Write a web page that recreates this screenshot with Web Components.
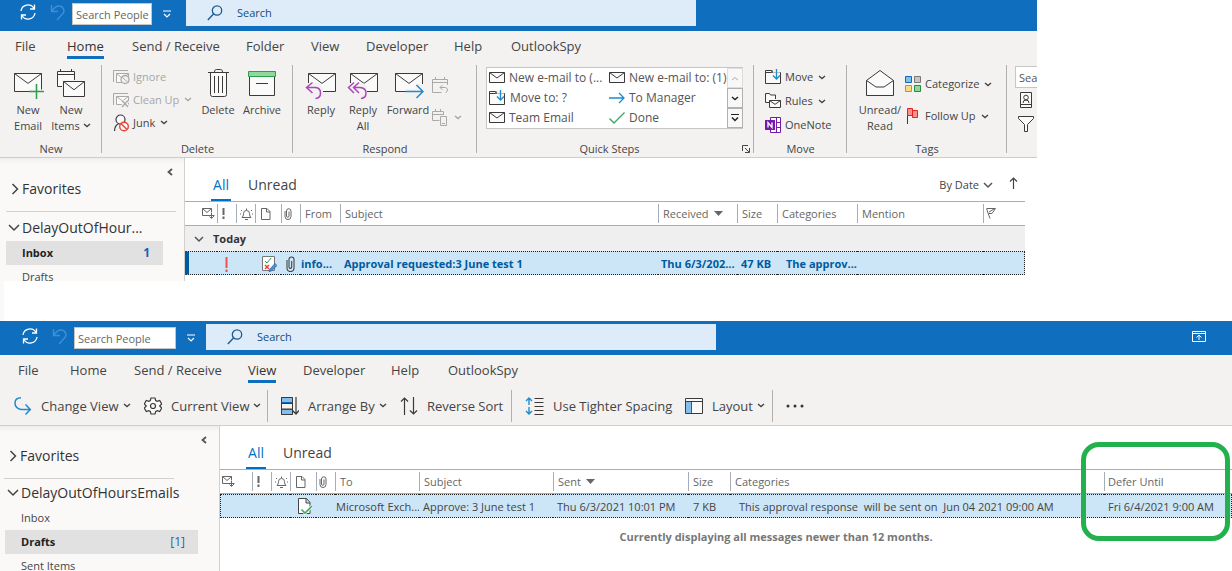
<!DOCTYPE html>
<html lang="en">
<head>
<meta charset="utf-8">
<title>Outlook - delayed emails</title>
<style>
  body { margin: 0; background: #fff; color: #444; font: 12px/16px "Open Sans", "Noto Sans", sans-serif; overflow-x: hidden; }
  .first { margin-right: 195px; }
  .spacer { height: 40px; border-left: 4px solid #faf9f8; }
</style>
</head>
<body>
<ol-window class="first">
  <ol-titlebar slot="title" style="--pad:20px;--top:0px;--people:80px;--gap:15px"></ol-titlebar>
  <ol-tabs slot="tabs" active="Home" items="File,Home,Send / Receive,Folder,View,Developer,Help,OutlookSpy" style="--pad:15px;--cols:52px 65px 114px 65px 55px 88px 57px auto;--below:3px"></ol-tabs>
  <ol-ribbon slot="ribbon">
    <ol-group label="New" style="--w:101px;--pad:7px">
      <ol-big icon="mailplus" label="New|Email" style="--w:42px"></ol-big>
      <ol-big icon="newitems" label="New|Items" menu style="--w:44px"></ol-big>
    </ol-group>
    <ol-group label="Delete" style="--w:190px;--pad:11px">
      <ol-stack style="--w:85px;--row:23px">
        <ol-small icon="ignore" label="Ignore" off></ol-small>
        <ol-small icon="cleanup" label="Clean Up" menu off></ol-small>
        <ol-small icon="junk" label="Junk" menu></ol-small>
      </ol-stack>
      <ol-big icon="trash" label="Delete" style="--w:40px"></ol-big>
      <ol-big icon="archive" label="Archive" style="--w:48px"></ol-big>
    </ol-group>
    <ol-group label="Respond" style="--w:183px;--pad:7px">
      <ol-big icon="reply" label="Reply" style="--w:42px"></ol-big>
      <ol-big icon="replyall" label="Reply|All" style="--w:42px"></ol-big>
      <ol-big icon="forward" label="Forward" style="--w:48px"></ol-big>
      <ol-stack style="--w:36px;--row:32px;--lead:4px">
        <ol-small icon="meeting" label="" off></ol-small>
        <ol-small icon="moreresp" label="" menu off></ol-small>
      </ol-stack>
    </ol-group>
    <ol-group label="Quick Steps" launcher style="--w:276px;--pad:9px">
      <ol-quicksteps></ol-quicksteps>
    </ol-group>
    <ol-group label="Move" style="--w:92px;--pad:11px">
      <ol-stack style="--w:80px;--row:24px">
        <ol-small icon="move" label="Move" menu></ol-small>
        <ol-small icon="rules" label="Rules" menu></ol-small>
        <ol-small icon="onenote" label="OneNote"></ol-small>
      </ol-stack>
    </ol-group>
    <ol-group label="Tags" style="--w:159px;--pad:8px">
      <ol-big icon="unread" label="Unread/|Read" style="--w:50px"></ol-big>
      <ol-stack style="--w:100px;--row:32px;--lead:3px">
        <ol-small icon="categorize" label="Categorize" menu></ol-small>
        <ol-small icon="flag" label="Follow Up" menu></ol-small>
      </ol-stack>
    </ol-group>
    <ol-find></ol-find>
  </ol-ribbon>
  <ol-folders slot="folders" kind="inbox"></ol-folders>
  <ol-inbox slot="list"></ol-inbox>
</ol-window>
<div class="spacer"></div>
<ol-window>
  <ol-titlebar slot="title" display style="--pad:22px;--top:3px;--people:102px;--gap:11px"></ol-titlebar>
  <ol-tabs slot="tabs" active="View" items="File,Home,Send / Receive,View,Developer,Help,OutlookSpy" style="--pad:18px;--cols:52px 64px 114px 55px 88px 57px auto;--below:3px"></ol-tabs>
  <ol-toolbar slot="ribbon"></ol-toolbar>
  <ol-folders slot="folders" kind="drafts"></ol-folders>
  <ol-drafts slot="list"></ol-drafts>
</ol-window>

<script>
const G = '#3b3a39', B = '#1e8bcd', P = '#ac47b8', R = '#e8443a', N = '#2f9e4a', L = '#a9a9a9';
const env = (x, y, w, h, c = G, f = '#fafafa') =>
  `<path d="M${x} ${y}h${w}v${h}h-${w}z" fill="${f}" stroke="${c}"/><path d="M${x} ${y}l${w / 2} ${h * 0.55}l${w / 2} -${h * 0.55}" stroke="${c}"/>`;
/* name: [width, height, drawing] */
const ICONS = {
  mailplus: [32, 32, env(2.5, 5.5, 27, 18) + `<path d="M17 23.500h15M24.500 16v15" stroke="#f3f2f1" stroke-width="4"/><path d="M17 23.500h15M24.500 16v15" stroke="${N}" stroke-width="1.500"/>`],
  newitems: [32, 32, `<path d="M2.500 3.500h17v15h-17zM2.500 6.500h17M5.500 1v3M16.500 1v3" fill="#fafafa" stroke="${G}"/><path d="M7 12h25v18H7z" fill="#f3f2f1" />` + env(8.5, 13.5, 21, 15)],
  trash: [32, 32, `<path d="M6 4.500h21M12.500 4c0-2 1-2.500 2-2.500h4c1 0 2 .5 2 2.500" stroke="${G}"/><path d="M8.500 5v21.500q0 2 2 2h12q2 0 2-2V5" fill="#fafafa" stroke="${G}"/><path d="M12.500 8v17M16.500 8v17M20.500 8v17" stroke="${G}"/>`],
  archive: [32, 32, `<path d="M3.500 9v18.500h25V9" fill="#fafafa" stroke="${G}"/><path d="M2.500 3.500h27v5h-27z" fill="#8fd99f" stroke="${N}"/><path d="M10 15.500h12" stroke="${G}"/>`],
  reply: [32, 32, env(3.5, 5.5, 27, 18) + `<path d="M1 15h13l4 4v11H1z" fill="#f3f2f1"/><path d="M7.500 14.500l-6 5 6 5.500M2 19.500h8.500q5 .5 5 5.500t-5 5.500" stroke="${P}" stroke-width="1.500"/>`],
  replyall: [32, 32, env(3.5, 5.5, 27, 18) + `<path d="M1 15h15l4 4v11H1z" fill="#f3f2f1"/><path d="M7 14.500l-5.500 5 5.500 5.500M12 14.500l-5.500 5 5.500 5.500M7 19.500h6q6 .5 6 5.500t-5 5.500" stroke="${P}" stroke-width="1.500"/>`],
  forward: [32, 32, env(3.5, 5.5, 27, 18) + `<path d="M14 21h10v-5h8v14H14z" fill="#f3f2f1"/><path d="M14 23.500h17M24.500 17l6.500 6.500-6.500 6.500" stroke="${B}" stroke-width="1.500"/>`],
  unread: [32, 32, `<path d="M2.500 12.500L16 2.500l13.500 10v15h-27z" fill="#fafafa" stroke="${G}"/><path d="M2.500 12.500L12 19h8l9.500-6.500" stroke="${G}"/>`],
  ignore: [17, 16, `<path d="M.5 13V1.500H15" stroke="${L}"/>` + env(3.5, 4.500, 12, 9, L) + `<circle cx="12" cy="10.500" r="4" fill="#f3f2f1" stroke="${L}" stroke-width="1.300"/><path d="M9 8l6 5.500" stroke="${L}"/>`],
  cleanup: [17, 16, `<path d="M.5 13V1.500H15" stroke="${L}"/>` + env(3.5, 4.500, 12, 8, L) + `<path d="M9 8.500l6 6.500M15 8.500l-6 6.500" stroke="#f3f2f1" stroke-width="4"/><path d="M9 8.500l6 6.500M15 8.500l-6 6.500" stroke="${L}" stroke-width="1.300"/>`],
  junk: [17, 18, `<circle cx="7.500" cy="5.500" r="4.500" fill="#fafafa" stroke="${G}" stroke-width="1.200"/><path d="M1.500 17q0-5.500 4.500-7.500" stroke="${G}" stroke-width="1.200"/><circle cx="11" cy="12.500" r="4.300" fill="#fafafa" stroke="${R}" stroke-width="1.400"/><path d="M8 9.500l6 6" stroke="${R}" stroke-width="1.400"/>`],
  meeting: [17, 17, `<path d="M15.500 8V2.500H.5v13h9M.5 5.500h15M3.500 0v3M12.500 0v3" stroke="${L}"/><path d="M10.500 8l-2.500 2.500 2.500 2.500M8 10.500h5.500q2 .5 2 2.500t-2 2.500" stroke="${L}"/>`],
  moreresp: [17, 17, `<path d="M11.500 6V2.500H.5v9h7M.5 5.500h11M3.500 0v3M8.500 0v3M8.500 7.500h6v9h-6zM10 14.500h3" stroke="${L}"/>`],
  mail: [16, 12, env(.5, .5, 15, 10)],
  move: [17, 16, `<path d="M.5 14.500V1.500h6l1 2h8v11z" fill="#fafafa" stroke="${G}"/><path d="M.5 3.500h6l1-2" stroke="${G}"/><path d="M8 0h7v9H8z" fill="#f3f2f1" opacity=".7"/><path d="M11.500 0v10M8 6.500l3.500 3.500L15 6.500" stroke="${B}" stroke-width="1.300"/>`],
  rules: [17, 16, `<path d="M4 9.500H.5v-9h4l1 1.500h5v4" fill="#fafafa" stroke="${G}"/>` + env(4.5, 7.5, 11, 7)],
  onenote: [17, 16, `<path d="M5.500 .5h10v15h-10zM11.500 .5v15M11.500 5.500h4M11.500 10.500h4" stroke="#7719aa" fill="#fff"/><path d="M0 3h10v10H0z" fill="#7719aa"/><path d="M3 10.500v-5l4 5v-5" stroke="#fff" stroke-width="1.300"/>`],
  categorize: [17, 16, `<path d="M.5 .5h6v6h-6z" fill="#83beec" stroke="#1068b8"/><path d="M9.500 .5h6v6h-6z" fill="#c8c6c4" stroke="#797775"/><path d="M.5 9.500h6v6h-6z" fill="#ffd98a" stroke="#e08a00"/><path d="M9.500 9.500h6v6h-6z" fill="#90d89a" stroke="#1f8f3a"/>`],
  flag: [17, 16, `<path d="M2.500 1v15" stroke="${G}"/><path d="M2.500 .5h5v2h5v7h-5v-2h-5z" fill="#ff8e8e" stroke="#e0241b"/><path d="M7.500 2v6" stroke="#e0241b"/>`],
  arrowright: [16, 12, `<path d="M0 6h15M10 1l5 5-5 5" stroke="${B}" stroke-width="1.300"/>`],
  check: [16, 12, `<path d="M.5 6.500L5 11 15.500.5" stroke="#3fa865" stroke-width="1.400"/>`],
  contact: [13, 16, `<path d="M.5 .5h11v15H.5zM.5 12.500h11M3 11q0-3 3-3t3 3" fill="#fafafa" stroke="${G}"/><circle cx="6" cy="5.500" r="2.300" stroke="${G}"/>`],
  funnel: [17, 16, `<path d="M.5 .5h15v2l-6 6v7h-3v-7l-6-6z" fill="#fafafa" stroke="${G}"/>`],
  chev: [8, 5, `<path d="M1 1l3 2.500L7 1" stroke="currentColor" stroke-width="1.400"/>`],
  chevup: [8, 5, `<path d="M1 4l3-2.500L7 4" stroke="#aaa"/>`],
  chevbar: [8, 8, `<path d="M0 .5h8" stroke="#222"/><path d="M1 3.500l3 3 3-3" stroke="#222" stroke-width="1.500"/>`],
  customize: [8, 8, `<path d="M0 1h8M1 4l3 3 3-3" stroke="#fff" stroke-width="1.200"/>`],
  launch: [8, 8, `<path d="M.5 6V.5H6M3 3l4 4M7.500 3v4.500H3" stroke="#444"/>`],
  sync: [16, 16, `<path d="M1 7A7 7 0 0 1 14 4.500M15 9A7 7 0 0 1 2 11.500M14.500 .5v4.500H10M1.500 15.500V11H6" stroke="#fff" stroke-width="1.300"/>`],
  undo: [16, 17, `<path d="M1.500 1v6.500H8M1.500 7.500Q5 2 9 2t5 4.500q0 2-1.500 3.500L7 16" stroke="#3f8fd6" stroke-width="1.400"/>`],
  search: [16, 16, `<circle cx="10" cy="5.500" r="4.700" stroke="#1b5c91" stroke-width="1.300"/><path d="M6.500 9L.8 15" stroke="#1b5c91" stroke-width="1.400"/>`],
  display: [14, 11, `<path d="M.5 .5h13v10H.5zM.5 2.500h13M7 9V4.500M4.500 6.500L7 4l2.500 2.500" stroke="#fff"/>`],
  changeview: [18, 18, `<path d="M7 .8Q1 1 1 6t6 6.500h9M11.500 7.500l4.800 5-4.800 5" stroke="${B}" stroke-width="1.500"/>`],
  gear: [18, 18, `<path d="M7 1h4l.7 2.500 1.500.8 2.500-.8 2 3.500-2 2 2 2-2 3.500-2.500-.8-1.500.8L11 17H7l-.7-2.500-1.500-.8-2.500.8-2-3.500 2-2-2-2 2-3.500 2.500.8 1.500-.8z" fill="#fafafa" stroke="${G}" stroke-width="1.200"/><circle cx="9" cy="9" r="2.500" stroke="${G}" stroke-width="1.200"/>`],
  arrange: [18, 18, `<path d="M.5 .5h11v5H.5zM.5 12.500h11v5H.5z" fill="#83beec" stroke="#1068b8"/><path d="M.5 .5h11v17H.5zM.5 6.500h11M.5 12h11" stroke="${G}"/><path d="M15 0v16.500M11.500 13.500l3.500 3.500 3-3.500" stroke="${G}" stroke-width="1.200"/>`],
  reverse: [18, 18, `<path d="M4.500 18V1M1 4.500L4.500 1 8 4.500M13.500 0v17M10 13.500l3.500 3.500 3.500-3.500" stroke="${G}" stroke-width="1.200"/>`],
  tighter: [19, 18, `<path d="M4 1v16M1 4l3-3 3 3M1 14l3 3 3-3" stroke="${B}" stroke-width="1.400"/><path d="M2 9h4" stroke="#f3f2f1" stroke-width="2"/><path d="M9.500 1.500h9M9.500 5.500h9M9.500 9.500h9M9.500 13.500h9M9.500 17.500h9" stroke="${G}"/>`],
  layout: [18, 16, `<path d="M.5 .5h17v15H.5z" fill="#fafafa" stroke="${G}"/><path d="M1 4h5v11H1z" fill="#83beec"/><path d="M.5 3.500h17" stroke="${G}"/><path d="M6.500 4v11" stroke="#1068b8"/>`],
  dots: [18, 4, `<g fill="#333" stroke="none"><circle cx="2" cy="2" r="1.500"/><circle cx="9" cy="2" r="1.500"/><circle cx="16" cy="2" r="1.500"/></g>`],
  right: [8, 12, `<path d="M1.500 1l5 5-5 5" stroke="#444" stroke-width="1.500"/>`],
  down: [12, 8, `<path d="M1 1l5 5 5-5" stroke="#444" stroke-width="1.500"/>`],
  downsm: [10, 7, `<path d="M1 1l4 4 4-4" stroke="#555" stroke-width="1.500"/>`],
  collapse: [6, 8, `<path d="M5 1L1.500 4 5 7" stroke="#555" stroke-width="1.800"/>`],
  up: [9, 12, `<path d="M4.500 12V1M1 4.500L4.500 1 8 4.500" stroke="#444" stroke-width="1.200"/>`],
  hmail: [13, 11, `<path d="M7 7.500H.5v-7h9v4M.5 .5L5 4.500 9.500 .5M9.500 5v5M7 7.500h5.500M7.500 8.500l2 2 2.500-2.500" stroke="#666"/>`],
  hbang: [3, 11, `<path d="M1.500 0v7M1.500 8.500v2.500" stroke="#666" stroke-width="2"/>`],
  hbell: [13, 12, `<path d="M2 9.500q1.500-1 1.500-4t3-3 3 3 1.500 4zM5 11.500h3M6.500 2V.5M1 2l1 1M12 2l-1 1M0 6h1M12 6h1" stroke="#666"/>`],
  hpage: [10, 12, `<path d="M.5 .5h5.500l3 3v8h-8.500zM5.500 .5v3.500h3.500" stroke="#666"/>`],
  hclip: [8, 12, `<path d="M1 3v5.500a2.500 2.500 0 0 0 6 0V3a2 2 0 0 0-4.500 0v5a1 1 0 0 0 2.500 0V3.500" stroke="#666"/>`],
  hflag: [10, 11, `<path d="M1 .5h8.500L6 5.500l-3.500 0M.5 .5l3.500 10M9 .5L3 4" stroke="#666"/>`],
  sort: [9, 5, `<path d="M0 0h9L4.500 5z" fill="#666"/>`],
  bang: [3, 15, `<path d="M1.500 0v11M1.500 12.500v2.500" stroke="#ef5350" stroke-width="2"/>`],
  approval: [15, 16, `<path d="M.5 .5h12v14H.5z" fill="#fff" stroke="#777"/><path d="M3 5l2 2 4-5" stroke="${N}"/><path d="M3 9l4 4M7 9l-4 4" stroke="${R}" stroke-width="1.500"/><path d="M7.500 13.500l5.500-6 2 2-5.500 5.500-2.500.5z" fill="#4a8fd6" stroke="#2c6cb0" stroke-width=".8"/>`],
  clip: [9, 16, `<path d="M1 4v8a3.300 3.300 0 0 0 7 0V3.500a2.400 2.400 0 0 0-5 0V11a1.300 1.300 0 0 0 2.700 0V5" stroke="#444" stroke-width="1.100"/>`],
  approved: [15, 17, `<path d="M.5 .5h8l3.500 4v11H.5zM8 .5v4.500h4" fill="#fff" stroke="#444"/><path d="M3.500 11.500l3.500 3.500 7-7" stroke="#fff" stroke-width="3"/><path d="M3.500 11.500l3.500 3.500 7-7" stroke="#3fa865" stroke-width="1.600"/>`],
};

class Base extends HTMLElement {
  connectedCallback() {
    if (this.shadowRoot) return;
    this.attachShadow({ mode: 'open' }).innerHTML =
      `<style>*{box-sizing:border-box}button{font:inherit;color:inherit;background:none;border:0;padding:0;margin:0}:host{display:block;box-sizing:border-box}${this.css()}</style>${this.html()}`;
  }
  css() { return ''; }
  html() { return '<slot></slot>'; }
  attr(n) { return this.getAttribute(n) || ''; }
}
const ic = n => `<ol-icon name="${n}"></ol-icon>`;

customElements.define('ol-icon', class extends Base {
  css() { return ':host{display:inline-block;flex:none;line-height:0}svg{display:block}'; }
  html() {
    const [w, h, d] = ICONS[this.attr('name')];
    return `<svg width="${w}" height="${h}" viewBox="0 0 ${w} ${h}" fill="none" aria-hidden="true">${d}</svg>`;
  }
});

customElements.define('ol-window', class extends Base {
  css() { return `:host{overflow:hidden}
    .top{background:#f3f2f1;border-bottom:1px solid #cfcdcb}
    .main{display:flex;background:#fff}
    ::slotted([slot=list]){flex:1;min-width:0}`; }
  html() { return `<div class="top"><slot name="title"></slot><slot name="tabs"></slot><slot name="ribbon"></slot></div>
    <div class="main"><slot name="folders"></slot><slot name="list"></slot></div>`; }
});

customElements.define('ol-titlebar', class extends Base {
  css() { return `:host{background:#106ebe;padding:var(--top) 0 3px var(--pad);font-size:11px}
    .bar{display:flex;align-items:center;height:28px}
    .undo{margin:0 6px 0 14px}
    .people{width:var(--people);height:22px;font:inherit;color:#666;background:#fff;border:1px solid #c8c6c4;padding:0 0 0 3px;border-radius:0;margin:0}
    .people::placeholder{color:#666;opacity:1}
    .cust{width:8px;margin:0 var(--gap) 0 11px}
    .search{display:flex;align-items:center;align-self:flex-start;flex:1;max-width:510px;height:26px;background:#deecf9;padding-left:21px}
    .search input{font:inherit;color:#124d80;background:none;border:0;padding:0;margin-left:14px;flex:1}
    .search input::placeholder{color:#124d80;opacity:1}
    .disp{margin:0 26px 0 auto}`; }
  html() { return `<div class="bar"><button aria-label="Send and receive">${ic('sync')}</button><button class="undo" aria-label="Undo">${ic('undo')}</button>
    <input class="people" aria-label="Search People" placeholder="Search People"><button class="cust" aria-label="Customize">${ic('customize')}</button>
    <label class="search">${ic('search')}<input aria-label="Search" placeholder="Search"></label>
    ${this.hasAttribute('display') ? `<button class="disp" aria-label="Ribbon display">${ic('display')}</button>` : ''}</div>`; }
});

customElements.define('ol-tabs', class extends Base {
  css() { return `:host{font-size:13px}nav{display:grid;grid-template-columns:var(--cols);padding:6px 0 var(--below) var(--pad)}
    a{justify-self:start;color:#444;text-decoration:none;white-space:nowrap;line-height:19px;border-bottom:3px solid transparent}
    a.on{color:#333;border-color:#106ebe}`; }
  html() { return '<nav>' + this.attr('items').split(',').map(t => `<a href="#"${t === this.attr('active') ? ' class="on"' : ''}>${t}</a>`).join('') + '</nav>'; }
});

customElements.define('ol-ribbon', class extends Base {
  css() { return ':host{display:flex;height:95px;padding-top:3px;overflow:hidden;font-size:11px}'; }
});

customElements.define('ol-group', class extends Base {
  css() { return `:host{display:flex;flex-direction:column;flex:none;width:calc(var(--w) + 1px);background:linear-gradient(#b3b0ad,#b3b0ad) right top/1px 88px no-repeat}
    .body{display:flex;flex:none;height:76px;padding-left:var(--pad)}
    .foot{display:flex;justify-content:center;align-items:center}
    .name{flex:1;text-align:center}.foot button{padding-right:4px}`; }
  html() { const l = this.hasAttribute('launcher');
    return `<div class="body"><slot></slot></div><div class="foot"><span class="name">${this.attr('label')}</span>${l ? `<button aria-label="More">${ic('launch')}</button>` : ''}</div>`; }
});

customElements.define('ol-big', class extends Base {
  css() { return `:host{flex:none;width:var(--w)}button{display:flex;flex-direction:column;align-items:center;width:100%;padding-top:3px}
    .t{padding-top:2px;white-space:nowrap}ol-icon[name=chev]{vertical-align:2px;margin-left:3px}`; }
  html() { return `<button>${ic(this.attr('icon'))}<span class="t">${this.attr('label').replace('|', '<br>')}${this.hasAttribute('menu') ? ic('chev') : ''}</span></button>`; }
});

customElements.define('ol-stack', class extends Base {
  css() { return ':host{display:grid;flex:none;width:var(--w);grid-auto-rows:var(--row);align-content:start;padding-top:var(--lead,0px)}'; }
});

customElements.define('ol-small', class extends Base {
  css() { return `button{display:flex;align-items:center;height:100%;white-space:nowrap;gap:3px}
    :host([off]){color:#a6a6a6}ol-icon[name=chev]{margin-left:2px}`; }
  html() { return `<button${this.hasAttribute('off') ? ' disabled' : ''} aria-label="${this.attr('label') || 'Respond'}">${ic(this.attr('icon'))}${this.attr('label') ? `<span>${this.attr('label')}</span>` : ''}${this.hasAttribute('menu') ? ic('chev') : ''}</button>`; }
});

customElements.define('ol-quicksteps', class extends Base {
  css() { return `:host{font-size:12px}.box{display:flex;width:257px;height:62px;margin-top:2px;background:#fff;border:1px solid #c8c6c4}
    .grid{display:grid;grid-template-columns:120px 120px;grid-auto-rows:20px;flex:1;overflow:hidden}
    .grid button{display:flex;align-items:center;gap:4px;padding-left:2px;white-space:nowrap;color:#555}
    .sc{display:grid;grid-template-rows:20px 20px 20px;width:15px}
    .sc button{display:grid;place-items:center;border:1px solid #b3b0ad;background:#f8f8f8;color:#222;margin-right:-1px}
    .sc button:first-child{border-color:#ddd}`; }
  html() { const q = [['mail', 'New e-mail to (...'], ['mail', 'New e-mail to: (1)'], ['move', 'Move to: ?'], ['arrowright', 'To Manager'], ['mail', 'Team Email'], ['check', 'Done']];
    return `<div class="box"><div class="grid">${q.map(([i, t]) => `<button>${ic(i)}<span>${t}</span></button>`).join('')}</div>
    <div class="sc"><button aria-label="Up">${ic('chevup')}</button><button aria-label="Down">${ic('chev')}</button><button aria-label="More">${ic('chevbar')}</button></div></div>`; }
});

customElements.define('ol-find', class extends Base {
  css() { return `:host{flex:1;min-width:0;overflow:hidden;padding:1px 0 0 8px}
    input{display:block;width:120px;height:22px;font:inherit;border:1px solid #c8c6c4;padding:0 3px;margin:0}
    input::placeholder{color:#555;opacity:1}
    button{display:flex;align-items:center;justify-content:center;width:22px;height:24px}`; }
  html() { return `<input aria-label="Search People" placeholder="Search People"><button aria-label="Address Book">${ic('contact')}</button><button aria-label="Filter Email">${ic('funnel')}</button>`; }
});

customElements.define('ol-toolbar', class extends Base {
  css() { return `:host{display:flex;height:39px;align-items:center;padding-left:14px;font-size:13px}
    .set{display:flex;align-items:center;flex:none;height:32px;border-right:1px solid #b3b0ad}
    button{display:flex;align-items:center;gap:9px;flex:none;text-align:left;white-space:nowrap}
    span{display:flex;align-items:center;gap:4px}
    .a{width:254px}.a button:first-child{width:130px}
    .b{width:244px;padding-left:13px}.b button:first-child{width:119px}
    .c{width:261px;padding-left:13px}.c button:first-child{width:160px}
    .more{margin-left:13px}`; }
  html() { const b = (i, t, m) => `<button>${ic(i)}<span>${t}${m ? ic('chev') : ''}</span></button>`;
    return `<div class="set a">${b('changeview', 'Change View', 1)}${b('gear', 'Current View', 1)}</div>
    <div class="set b">${b('arrange', 'Arrange By', 1)}${b('reverse', 'Reverse Sort')}</div>
    <div class="set c">${b('tighter', 'Use Tighter Spacing')}${b('layout', 'Layout', 1)}</div>
    <button class="more" aria-label="More">${ic('dots')}</button>`; }
});

customElements.define('ol-folders', class extends Base {
  css() { return `:host{background:linear-gradient(#efeeed,#faf9f8 6px);border-right:1px solid #d2d0ce;flex:none;width:185px;height:123px;overflow:hidden;font-size:11px}
    :host([kind=drafts]){width:220px;height:146px}
    .col{display:flex;justify-content:flex-end;height:20px;padding:6px 11px 0 0}
    :host([kind=drafts]) .col{height:19px;padding-right:12px}
    h2{display:flex;align-items:center;gap:3px;margin:0;font-size:14px;line-height:22px;font-weight:400;color:#333;padding-left:11px}
    h2.d{padding-left:8px;gap:2px}
    hr{height:1px;border:0;background:#d2d0ce;margin:11px 8px 5px 6px}
    :host([kind=drafts]) hr{margin:11px 45px 3px 4px}
    nav{padding-top:2px}
    a{display:flex;justify-content:space-between;margin:0 21px 0 6px;padding:0 13px 0 16px;height:24px;line-height:23px;color:#444;text-decoration:none}
    a.on{background:#e1e1e1;color:#222}b+span{color:#1e62ad;font-size:12px}:host([kind=inbox]) b+span{font-weight:700}
    :host([kind=drafts]) h2{padding-left:9px}:host([kind=drafts]) h2.d{padding-left:7px}
    :host([kind=drafts]) a{margin-left:5px}`; }
  html() { const i = this.attr('kind') === 'inbox';
    return `<div class="col"><button aria-label="Collapse">${ic('collapse')}</button></div><h2>${ic('right')}Favorites</h2><hr>
    <h2 class="d">${ic('down')}${i ? 'DelayOutOfHour...' : 'DelayOutOfHoursEmails'}</h2><nav>` + (i
      ? '<a href="#" class="on"><b>Inbox</b><span>1</span></a><a href="#">Drafts</a>'
      : '<a href="#">Inbox</a><a href="#" class="on"><b>Drafts</b><span>[1]</span></a><a href="#">Sent Items</a>') + '</nav>'; }
});

class MailList extends Base {
  css() { return `:host{position:relative;font-size:11px}
    .bar{display:flex;align-items:flex-end;height:43px;padding:0 7px 0 26px}
    .bar .f{font-size:14px;line-height:28px;border-bottom:2px solid transparent;margin-right:17px;min-width:20px}
    .bar .on{color:#0072c6;border-color:#0072c6}
    .bar .sort{display:flex;align-items:center;gap:4px;height:32px;margin-left:auto}
    .bar .dir{height:32px;margin-left:16px}
    table{width:100%;table-layout:fixed;border-collapse:separate;border-spacing:0;border-top:1px solid #a6adba}
    th{height:24px;padding:2px 0;font-weight:400;text-align:left;color:#666;border-bottom:1px solid #a6adba}
    th div{display:flex;align-items:center;gap:5px;height:19px;padding-left:4px;border-left:1px solid #a6adba;white-space:nowrap}
    th:first-child div{border-color:transparent}
    td{height:24px;padding:0 0 0 5px;white-space:pre;overflow:hidden}
    .sel td{background:#cde6f7;border-top:1px dotted #222;border-bottom:1px dotted #222;padding-top:1px}
    .sel td:first-child{border-left:1px dotted #222}.sel td:last-child{border-right:1px dotted #222}
    td ol-icon{vertical-align:middle}`; }
  table(cols, body) {
    return `<table><colgroup>${cols.map(c => `<col${c[0] ? ` style="width:${c[0]}px"` : ''}>`).join('')}</colgroup><thead><tr>${cols.map(c => `<th scope="col"><div${c[2] ? ` style="padding-left:${c[2]}px"` : ''}>${c[1]}</div></th>`).join('')}</tr></thead><tbody>${body}</tbody></table>`;
  }
}

customElements.define('ol-inbox', class extends MailList {
  css() { return super.css() + `:host{padding-right:12px}
    .grp td{height:25px;background:#efefef;font-weight:700;color:#333;padding-left:9px}.grp ol-icon{margin-right:9px}
    .sel{font-weight:700;color:#005a9e}.sel td:first-child{border-left:4px solid #005a9e}`; }
  html() { return `<div class="bar"><button class="f on">All</button><button class="f">Unread</button><button class="sort">By Date ${ic('downsm')}</button><button class="dir" aria-label="Sort direction">${ic('up')}</button></div>` +
    this.table([[32, ic('hmail'), 16], [19, ic('hbang')], [19, ic('hbell'), 3], [26, ic('hpage'), 5], [19, ic('hclip'), 2], [40, 'From'], [0, 'Subject'], [79, 'Received' + ic('sort')], [40, 'Size'], [80, 'Categories'], [126, 'Mention'], [42, ic('hflag'), 2]],
    `<tr class="grp"><td colspan="12">${ic('downsm')}Today</td></tr>
     <tr class="sel"><td></td><td style="padding-left:8px">${ic('bang')}</td><td></td><td style="padding-left:7px">${ic('approval')}</td><td>${ic('clip')}</td><td style="padding-left:1px">info...</td><td style="padding-left:4px">Approval requested:3 June test 1</td><td style="padding-left:3px">Thu 6/3/202...</td><td style="padding-left:4px">47 KB</td><td style="padding-left:9px">The approv...</td><td></td><td></td></tr>`); }
});

customElements.define('ol-drafts', class extends MailList {
  css() { return super.css() + `.note{margin:11px 0 0 100px;text-align:center;font-weight:700;color:#777}
    .ring{position:absolute;right:2px;top:16px;width:149px;height:99px;border:5px solid #22b14c;border-radius:18px;pointer-events:none}`; }
  html() { return `<div class="bar"><button class="f on">All</button><button class="f">Unread</button></div>` +
    this.table([[32, ic('hmail'), 1], [19, ic('hbang')], [19, ic('hbell'), 3], [26, ic('hpage'), 5], [19, ic('hclip'), 2], [84, 'To'], [134, 'Subject'], [135, 'Sent' + ic('sort')], [42, 'Size'], [0, 'Categories'], [128, 'Defer Until', 3]],
    `<tr class="sel"><td></td><td></td><td></td><td style="padding-left:8px">${ic('approved')}</td><td></td><td style="padding-left:1px">Microsoft Exch...</td><td style="padding-left:4px">Approve: 3 June test 1</td><td style="padding-left:4px">Thu 6/3/2021 10:01 PM</td><td>7 KB</td><td style="padding-left:9px">This approval response  will be sent on  Jun 04 2021 09:00 AM</td><td style="padding-left:4px">Fri 6/4/2021 9:00 AM</td></tr>`) +
    `<p class="note">Currently displaying all messages newer than 12 months.</p><div class="ring"></div>`; }
});
</script>
</body>
</html>
